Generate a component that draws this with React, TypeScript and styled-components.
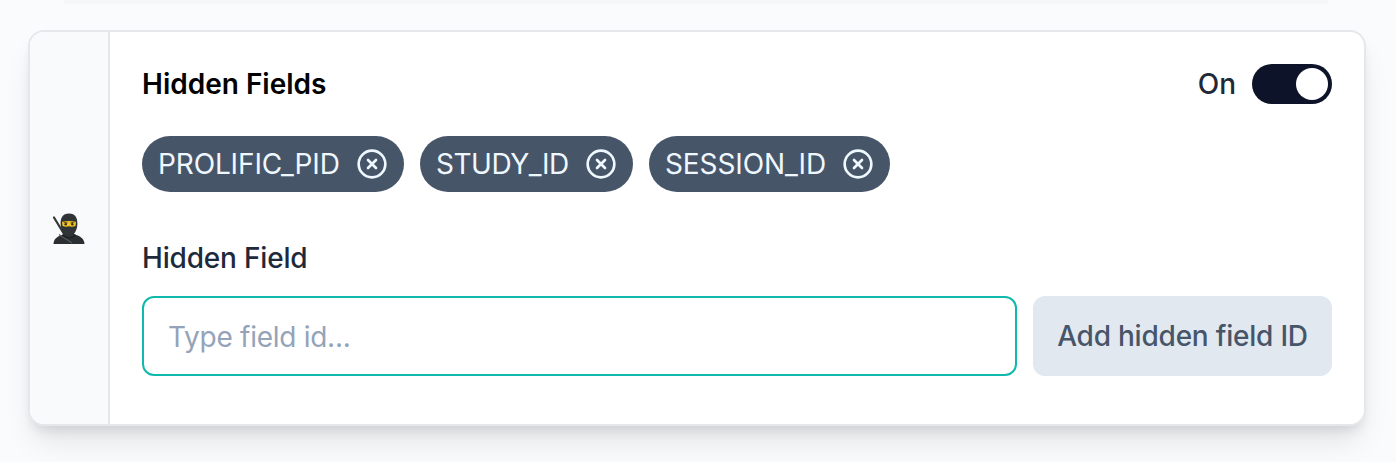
import React from "react";
import styled, { createGlobalStyle } from "styled-components";

const GlobalStyle = createGlobalStyle`
  *, *::before, *::after { box-sizing: border-box; }
  body {
    margin: 0;
    background: #fafbfd;
    font-family: Inter, "Liberation Sans", sans-serif;
    font-size: 28px;
    line-height: 40px;
    overflow: hidden;
  }
`;

const Page = styled.main`
  display: flex;
  flex-direction: column;
  height: 462px;
  background: #fafbfd;
`;

const PreviousShadow = styled.div`
  height: 4px;
  flex: none;
  margin: 0 68px 26px 64px;
  background: #f6f7f9;
`;

const Card = styled.section`
  display: flex;
  height: 396px;
  flex: none;
  margin: 0 30px 0 28px;
  border: 2px solid #e5e7eb;
  border-radius: 16px;
  background: #fff;
  box-shadow: 0 20px 30px -6px rgba(0, 0, 0, 0.1), 0 8px 12px -4px rgba(0, 0, 0, 0.1);
`;

const Rail = styled.aside`
  display: flex;
  align-items: center;
  justify-content: center;
  width: 80px;
  flex: none;
  padding-top: 2px;
  border-right: 2px solid #e5e7eb;
  border-radius: 14px 0 0 14px;
  background: #f9fafc;
`;

const Ninja = styled.svg`
  width: 34px;
  height: 34px;
`;

const Body = styled.div`
  display: flex;
  flex: 1;
  flex-direction: column;
  padding: 32px;
`;

const Header = styled.header`
  display: flex;
  align-items: center;
  justify-content: space-between;
  height: 40px;
`;

const Title = styled.h2`
  margin: 0;
  font-size: 28px;
  font-weight: 600;
  line-height: 40px;
  color: #000;
`;

const SwitchLabel = styled.label`
  display: flex;
  align-items: center;
  gap: 16px;
  font-weight: 500;
  color: #1f2937;
`;

const Track = styled.span`
  display: flex;
  justify-content: flex-end;
  width: 80px;
  height: 40px;
  padding: 4px;
  border-radius: 20px;
  background: #0d142a;
`;

const Thumb = styled.span`
  width: 32px;
  height: 32px;
  border-radius: 50%;
  background: #fff;
`;

const Chips = styled.div`
  display: flex;
  gap: 16px;
  margin-top: 32px;
`;

const Chip = styled.span<{ $width: number }>`
  display: flex;
  align-items: center;
  justify-content: space-between;
  width: ${(p) => p.$width}px;
  height: 56px;
  padding: 0 16px;
  border-radius: 28px;
  background: #475569;
  color: #f0f8ff;
  white-space: nowrap;
`;

const ChipText = styled.span<{ $tracking: number }>`
  letter-spacing: ${(p) => p.$tracking}px;
`;

const ChipIcon = styled.svg`
  width: 32px;
  height: 32px;
  flex: none;
`;

const FieldLabel = styled.label`
  margin-top: 46px;
  font-weight: 500;
  letter-spacing: -0.18px;
  color: #1e293b;
`;

const FormRow = styled.div`
  display: flex;
  gap: 16px;
  margin-top: 18px;
`;

const Input = styled.input`
  flex: 1;
  min-width: 0;
  height: 80px;
  padding: 2px 24px 0;
  border: 2px solid #0fb9ad;
  border-radius: 12px;
  outline: none;
  background: #fff;
  font: inherit;
  letter-spacing: -0.27px;
  &::placeholder {
    color: #94a3b8;
    opacity: 1;
  }
`;

const AddButton = styled.button`
  width: 299px;
  height: 80px;
  padding: 0;
  border: 0;
  border-radius: 12px;
  background: #e2e8f0;
  color: #475569;
  font: inherit;
  font-weight: 500;
  letter-spacing: -0.22px;
  white-space: nowrap;
`;

const fields = [
  { id: "PROLIFIC_PID", width: 262, tracking: -0.13 },
  { id: "STUDY_ID", width: 213, tracking: -0.48 },
  { id: "SESSION_ID", width: 241, tracking: -0.12 },
];

const NinjaIcon = () => (
  <Ninja viewBox="0 0 34 34" aria-label="Ninja">
    <path d="M2 5.500 12 22" stroke="#34383a" strokeWidth="2.200" strokeLinecap="round" />
    <path d="M1.500 32C1.800 27 5 24.500 10 23l3-2h8l3 2c5 1.500 8.200 4 8.500 9Z" fill="#2b2f31" />
    <path d="M17 1.500C10.500 1.500 8.500 6 8.600 12c.1 7 4 12 8.400 12s8.300-5 8.400-12C25.500 6 23.500 1.500 17 1.500Z" fill="#303436" />
    <path d="M10 9.800q7-1.800 14 0l-.5 4.200q-3.500 1.400-6.500.3-3 1.100-6.500-.3Z" fill="#f2c522" />
    <path d="m11.500 9.900 4 1.100m7-1.100-4 1.100" stroke="#5f4a14" strokeWidth="1" />
    <circle cx="13.700" cy="12.200" r="1.200" fill="#3a2c13" />
    <circle cx="20.300" cy="12.200" r="1.200" fill="#3a2c13" />
    <path d="M7 22.500 20 31" stroke="#555b5d" strokeWidth="1.200" />
    <path d="M10 23q7 6 14 0" stroke="#1e2122" strokeWidth="1.200" fill="none" />
  </Ninja>
);

export default function App() {
  return (
    <>
      <GlobalStyle />
      <Page>
        <PreviousShadow />
        <Card>
          <Rail>
            <NinjaIcon />
          </Rail>
          <Body>
            <Header>
              <Title>Hidden Fields</Title>
              <SwitchLabel>
                On
                <Track>
                  <Thumb />
                </Track>
              </SwitchLabel>
            </Header>
            <Chips>
              {fields.map((f) => (
                <Chip key={f.id} $width={f.width}>
                  <ChipText $tracking={f.tracking}>{f.id}</ChipText>
                  <ChipIcon viewBox="0 0 24 24" fill="none" stroke="currentColor" strokeWidth="2" strokeLinecap="round" strokeLinejoin="round">
                    <circle cx="12" cy="12" r="10" />
                    <path d="m15 9-6 6m0-6 6 6" />
                  </ChipIcon>
                </Chip>
              ))}
            </Chips>
            <FieldLabel htmlFor="field-id">Hidden Field</FieldLabel>
            <FormRow>
              <Input id="field-id" placeholder="Type field id..." />
              <AddButton type="button">Add hidden field ID</AddButton>
            </FormRow>
          </Body>
        </Card>
      </Page>
    </>
  );
}
